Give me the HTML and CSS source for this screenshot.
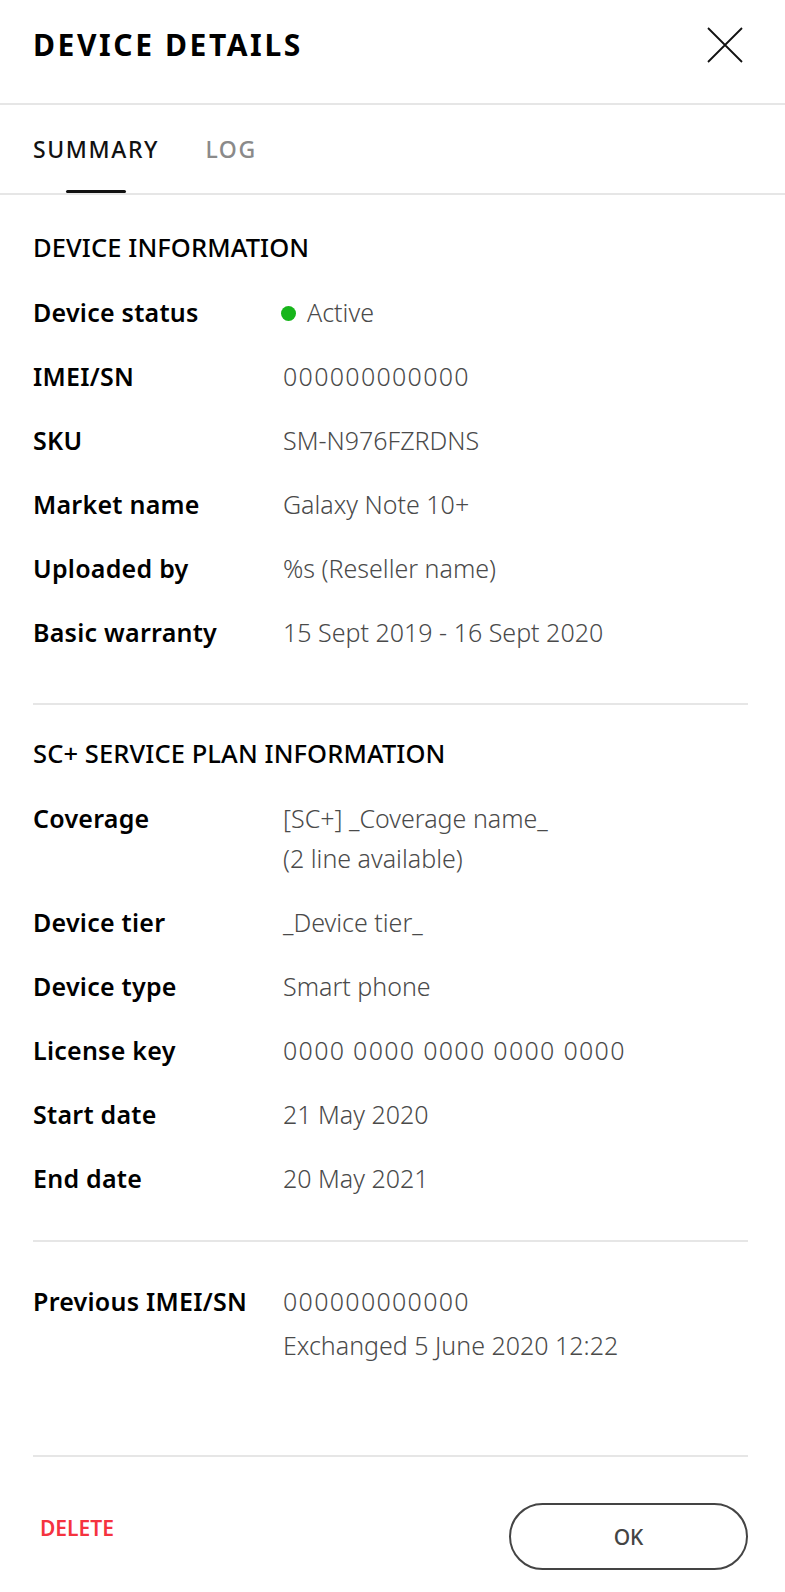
FILE: index.html
```html
<!DOCTYPE html>
<html lang="en">
<head>
<meta charset="utf-8">
<title>Device details</title>
<link rel="stylesheet" href="styles.css">
</head>
<body>
<div class="dialog">
  <header class="header">
    <h1 class="title">DEVICE DETAILS</h1>
    <button class="close" aria-label="Close">
      <svg width="36" height="36" viewBox="0 0 36 36"><path d="M1 1 L35 35 M35 1 L1 35" stroke="#111" stroke-width="1.8" fill="none"/></svg>
    </button>
  </header>
  <nav class="tabs">
    <div class="tab active">SUMMARY</div>
    <div class="tab">LOG</div>
  </nav>
  <main class="content">
    <section class="section first">
      <h2 class="heading">DEVICE INFORMATION</h2>
      <div class="row"><div class="label">Device status</div><div class="value"><span class="dot"></span>Active</div></div>
      <div class="row"><div class="label">IMEI/SN</div><div class="value"><span class="code">000000000000</span></div></div>
      <div class="row"><div class="label">SKU</div><div class="value">SM-N976FZRDNS</div></div>
      <div class="row"><div class="label">Market name</div><div class="value">Galaxy Note 10+</div></div>
      <div class="row"><div class="label">Uploaded by</div><div class="value">%s (Reseller name)</div></div>
      <div class="row"><div class="label">Basic warranty</div><div class="value">15 Sept 2019 - 16 Sept 2020</div></div>
    </section>
    <section class="section second">
      <h2 class="heading">SC+ SERVICE PLAN INFORMATION</h2>
      <div class="row"><div class="label">Coverage</div><div class="value">[SC+] _Coverage name_<br>(2 line available)</div></div>
      <div class="row"><div class="label">Device tier</div><div class="value">_Device tier_</div></div>
      <div class="row"><div class="label">Device type</div><div class="value">Smart phone</div></div>
      <div class="row"><div class="label">License key</div><div class="value"><span class="code">0000 0000 0000 0000 0000</span></div></div>
      <div class="row"><div class="label">Start date</div><div class="value">21 May 2020</div></div>
      <div class="row"><div class="label">End date</div><div class="value">20 May 2021</div></div>
    </section>
    <section class="section third">
      <div class="row prev"><div class="label">Previous IMEI/SN</div><div class="value"><span class="code">000000000000</span><br>Exchanged 5 June 2020 12:22</div></div>
    </section>
  </main>
  <footer class="footer">
    <button class="delete">DELETE</button>
    <button class="ok">OK</button>
  </footer>
</div>
</body>
</html>
```

FILE: styles.css
```css
* { box-sizing: border-box; }
html, body { margin: 0; padding: 0; background: #fff; }
body {
  font-family: "Noto Sans", "Open Sans", sans-serif;
  color: #000;
  width: 785px;
}
.dialog { display: flex; flex-direction: column; }

.header {
  display: flex;
  justify-content: space-between;
  align-items: flex-start;
  height: 105px;
  padding: 27px 42px 0 33px;
  border-bottom: 2px solid #e6e6e6;
}
.title {
  margin: 0;
  font-size: 30px;
  line-height: 36px;
  font-weight: 700;
  letter-spacing: 2.6px;
}
.close {
  width: 36px;
  height: 36px;
  padding: 0;
  border: 0;
  background: none;
  display: block;
}
.close svg { display: block; }

.tabs {
  display: flex;
  gap: 42px;
  padding: 30px 33px 0;
  border-bottom: 2px solid #e6e6e6;
}
.tab {
  display: flex;
  flex-direction: column;
  align-items: center;
  font-size: 23px;
  line-height: 28px;
  font-weight: 500;
  letter-spacing: 1.6px;
  color: #8a8a8a;
}
.tab::after {
  content: "";
  display: block;
  width: 60px;
  height: 3px;
  margin-top: 27px;
  border-radius: 2px;
  background: transparent;
}
.tab.active { color: #111; }
.tab.active::after { background: #111; }

.content { padding: 0 37px 0 33px; }
.section { border-bottom: 2px solid #e6e6e6; }
.section.first { padding: 36px 0 39px; }
.section.second { padding: 32px 0 30px; }
.section.third { padding: 37px 0 88px; }

.heading {
  margin: 0 0 17px;
  font-size: 25.5px;
  line-height: 32px;
  font-weight: 500;
  letter-spacing: 0.1px;
}
.row {
  display: grid;
  grid-template-columns: 250px 1fr;
  padding: 12px 0;
}
.label {
  font-size: 25px;
  line-height: 40px;
  font-weight: 600;
  letter-spacing: 0.25px;
  color: #000;
}
.value {
  font-size: 25px;
  line-height: 40px;
  font-weight: 300;
  color: #4a4a4a;
  display: block;
}
.code { letter-spacing: 1.3px; }
.row.prev { padding: 0; }
.row.prev .label, .row.prev .value { line-height: 44px; }

.dot {
  display: inline-block;
  width: 15px;
  height: 15px;
  border-radius: 50%;
  background: #17b51b;
  margin: 0 11px 0 -2px;
  vertical-align: 1px;
}

.footer {
  display: flex;
  justify-content: space-between;
  align-items: flex-start;
  padding: 46px 37px 21px 40px;
}
.delete {
  margin-top: 11px;
  padding: 0;
  border: 0;
  background: none;
  font-family: inherit;
  font-size: 21px;
  line-height: 28px;
  font-weight: 600;
  letter-spacing: 0;
  color: #f5333f;
}
.ok {
  width: 239px;
  height: 67px;
  border: 2px solid #444;
  border-radius: 34px;
  background: #fff;
  font-family: inherit;
  font-size: 21px;
  font-weight: 500;
  color: #444;
  padding: 0;
}
```
